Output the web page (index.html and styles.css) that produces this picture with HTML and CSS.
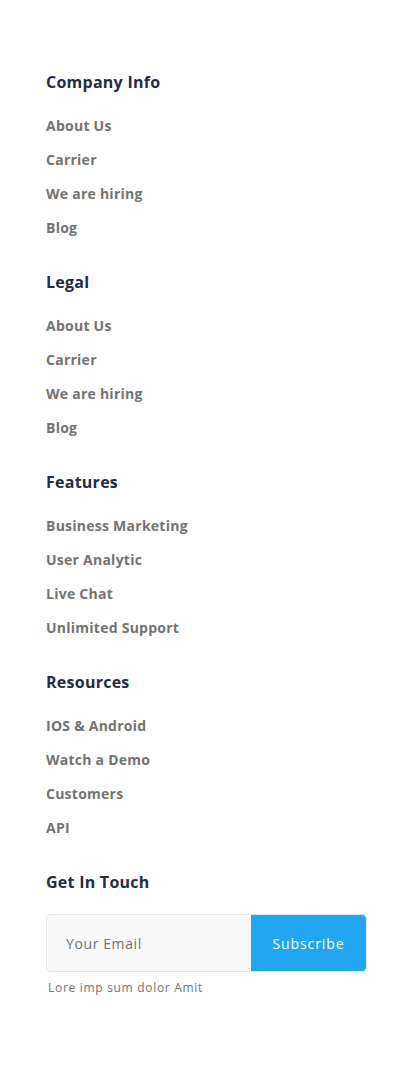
FILE: index.html
```html
<!DOCTYPE html>
<html lang="en">
<head>
<meta charset="utf-8">
<title>Footer</title>
<link rel="stylesheet" href="styles.css">
</head>
<body>
<footer class="footer">
  <section class="col">
    <h5 class="col-title">Company Info</h5>
    <ul class="links">
      <li><a href="#">About Us</a></li>
      <li><a href="#">Carrier</a></li>
      <li><a href="#">We are hiring</a></li>
      <li><a href="#">Blog</a></li>
    </ul>
  </section>
  <section class="col">
    <h5 class="col-title">Legal</h5>
    <ul class="links">
      <li><a href="#">About Us</a></li>
      <li><a href="#">Carrier</a></li>
      <li><a href="#">We are hiring</a></li>
      <li><a href="#">Blog</a></li>
    </ul>
  </section>
  <section class="col">
    <h5 class="col-title">Features</h5>
    <ul class="links">
      <li><a href="#">Business Marketing</a></li>
      <li><a href="#">User Analytic</a></li>
      <li><a href="#">Live Chat</a></li>
      <li><a href="#">Unlimited Support</a></li>
    </ul>
  </section>
  <section class="col">
    <h5 class="col-title">Resources</h5>
    <ul class="links">
      <li><a href="#">IOS &amp; Android</a></li>
      <li><a href="#">Watch a Demo</a></li>
      <li><a href="#">Customers</a></li>
      <li><a href="#">API</a></li>
    </ul>
  </section>
  <section class="col">
    <h5 class="col-title">Get In Touch</h5>
    <form class="subscribe">
      <input class="email" type="email" placeholder="Your Email">
      <button class="btn" type="button">Subscribe</button>
    </form>
    <p class="note">Lore imp sum dolor Amit</p>
  </section>
</footer>
</body>
</html>
```

FILE: styles.css
```css
* { box-sizing: border-box; }
html, body { margin: 0; padding: 0; background: #ffffff; }
body {
  font-family: "Open Sans", "DejaVu Sans", sans-serif;
  color: #252B42;
}
.footer {
  display: flex;
  flex-direction: column;
  gap: 30px;
  padding: 70px 48px 70px 46px;
}
.col {
  display: flex;
  flex-direction: column;
  gap: 20px;
}
.col-title {
  margin: 0;
  font-size: 16px;
  line-height: 24px;
  font-weight: 700;
  color: #252B42;
  letter-spacing: 0.25px;
}
.links {
  list-style: none;
  margin: 0;
  padding: 0;
  display: flex;
  flex-direction: column;
  gap: 10px;
}
.links a {
  display: block;
  font-size: 14px;
  line-height: 24px;
  font-weight: 700;
  color: #737373;
  text-decoration: none;
  letter-spacing: 0.25px;
}
.subscribe {
  display: flex;
  margin: 0;
  width: 321px;
  height: 58px;
}
.email {
  flex: 1;
  min-width: 0;
  height: 58px;
  border: 1px solid #E6E6E6;
  border-right: none;
  border-radius: 5px 0 0 5px;
  background: #F9F9F9;
  padding: 0 19px;
  font-family: inherit;
  font-size: 14px;
  color: #737373;
  letter-spacing: 0.6px;
}
.email::placeholder { color: #737373; }
.btn {
  width: 116px;
  height: 58px;
  border: 1px solid #E6E6E6;
  border-left: none;
  border-radius: 0 5px 5px 0;
  background: #23A6F0;
  color: #ffffff;
  font-family: inherit;
  font-size: 14px;
  font-weight: 400;
  letter-spacing: 0.9px;
  padding: 0;
}
.note {
  margin: -18px 0 0 2px;
  font-size: 12px;
  line-height: 28px;
  color: #737373;
  letter-spacing: 0.7px;
}
```
